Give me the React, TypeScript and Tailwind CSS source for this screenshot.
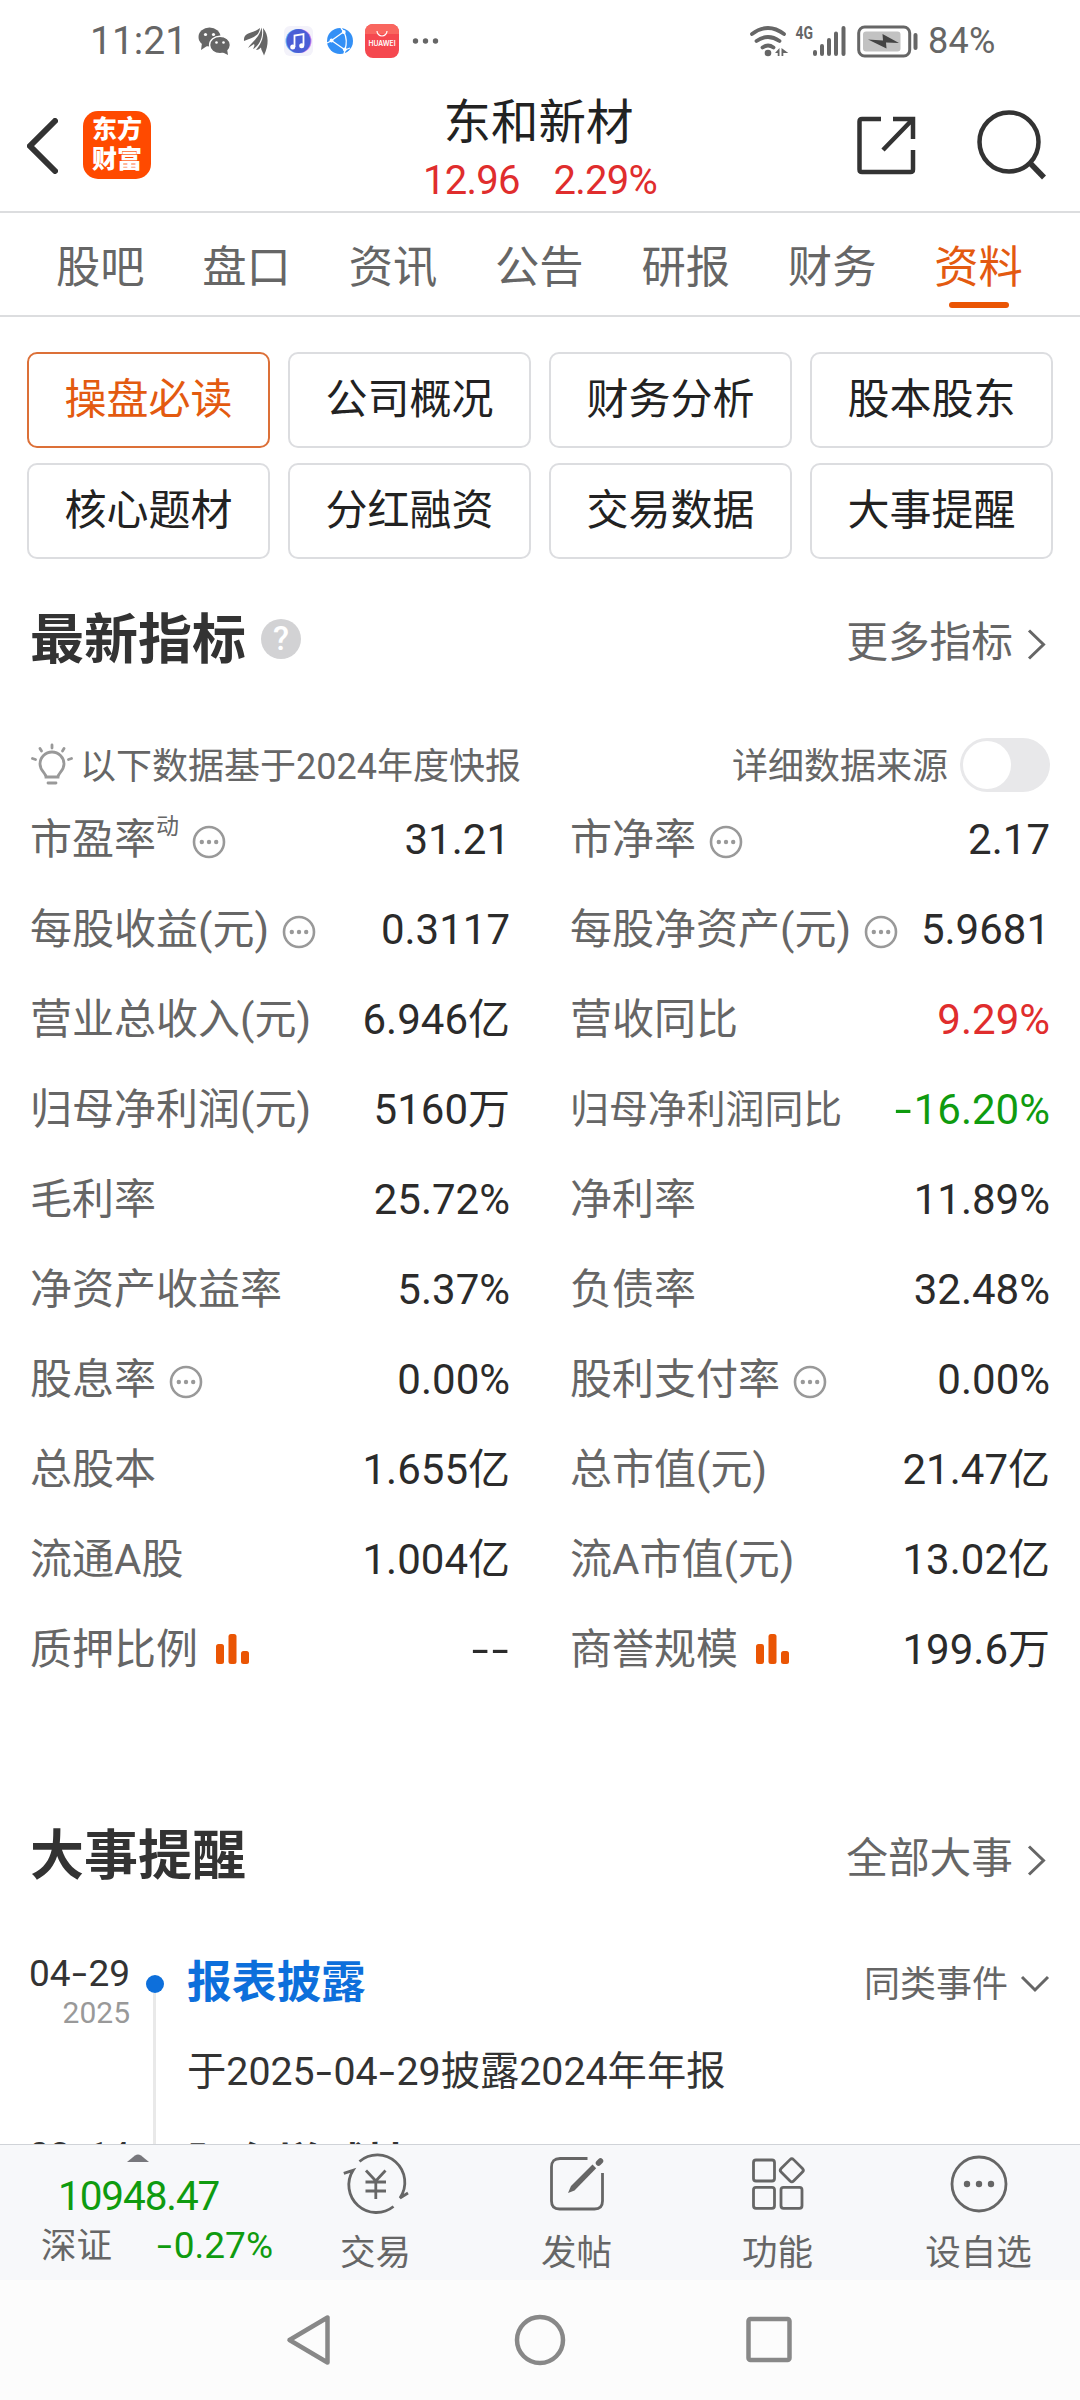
import React from "react";

type Metric = {
  label: string;
  value: string;
  sup?: string;
  info?: boolean;
  chart?: boolean;
  small?: boolean;
  tone?: "up" | "down";
};

const tabs = ["股吧", "盘口", "资讯", "公告", "研报", "财务", "资料"];
const topics = ["操盘必读", "公司概况", "财务分析", "股本股东", "核心题材", "分红融资", "交易数据", "大事提醒"];

const metrics: Metric[] = [
  { label: "市盈率", sup: "动", info: true, value: "31.21" },
  { label: "市净率", info: true, value: "2.17" },
  { label: "每股收益(元)", info: true, value: "0.3117" },
  { label: "每股净资产(元)", info: true, value: "5.9681" },
  { label: "营业总收入(元)", value: "6.946亿" },
  { label: "营收同比", value: "9.29%", tone: "up" },
  { label: "归母净利润(元)", value: "5160万" },
  { label: "归母净利润同比", value: "-16.20%", tone: "down", small: true },
  { label: "毛利率", value: "25.72%" },
  { label: "净利率", value: "11.89%" },
  { label: "净资产收益率", value: "5.37%" },
  { label: "负债率", value: "32.48%" },
  { label: "股息率", info: true, value: "0.00%" },
  { label: "股利支付率", info: true, value: "0.00%" },
  { label: "总股本", value: "1.655亿" },
  { label: "总市值(元)", value: "21.47亿" },
  { label: "流通A股", value: "1.004亿" },
  { label: "流A市值(元)", value: "13.02亿" },
  { label: "质押比例", chart: true, value: "--" },
  { label: "商誉规模", chart: true, value: "199.6万" },
];

/* Text whose hyphens are drawn as wide as a digit. */
function Wide({ children }: { children: string }) {
  return (
    <>
      {children.split(/(-)/).map((part, i) =>
        part === "-" ? (
          <span key={i} className="mx-[0.09em] inline-block w-[0.3em] scale-x-[1.45] text-center">-</span>
        ) : (
          part
        ),
      )}
    </>
  );
}

function StatusBar() {
  return (
    <div className="flex h-[82px] shrink-0 items-center pl-[90px] text-[#666]">
      <span className="w-[108px] text-[39px] leading-none">11:21</span>
      <svg width="242" height="40" viewBox="198 19 242 40">
        <ellipse cx="209.5" cy="35" rx="11" ry="9.5" fill="#666" />
        <path d="M202 41l-1 7 6-4z" fill="#666" />
        <circle cx="205.5" cy="32.5" r="1.6" fill="#fff" />
        <circle cx="213.5" cy="32.5" r="1.6" fill="#fff" />
        <ellipse cx="220" cy="43" rx="10.4" ry="8.8" fill="#666" stroke="#fff" strokeWidth="1.4" />
        <path d="M222 50l6 3-1-6z" fill="#666" />
        <circle cx="216.5" cy="40.5" r="1.3" fill="#fff" />
        <circle cx="223.500" cy="40.500" r="1.300" fill="#fff" />
        <path d="M244 39c-1-9 9-7 16-13-1 8-6 9-16 13z" fill="#666" />
        <path d="M248 46c4-7 11-9 13.500-20.500C264 35 259 44 253 47c1-2 2-3 1-5-2 1-4 3-6 4z" fill="#666" />
        <path d="M256 48c6-7 8-14 7-22 6 7 6 17 1 27.500-1-3-3-5.500-3-8-1 1-3 2.500-5 2.500z" fill="#666" />
        <rect x="284" y="24" width="29" height="30" rx="6" fill="#f3f2fa" />
        <circle cx="299.500" cy="39" r="12" fill="#c77df0" />
        <circle cx="297.500" cy="39" r="12" fill="#6fb8f5" />
        <circle cx="298.500" cy="39" r="12" fill="#4a5fd6" />
        <path d="M294.500 45V33.500l9-1.500V43.500" stroke="#fff" strokeWidth="1.800" fill="none" />
        <circle cx="292.700" cy="45" r="2.500" fill="#fff" />
        <circle cx="301.700" cy="43.700" r="2.500" fill="#fff" />
        <circle cx="340" cy="39" r="13" fill="#3390f6" />
        <path d="M331.500 38.500L343.500 30M331.500 38.500l13 9M344 30q4 8 1 18M331 39l-4 2M344 30l-3-4M345 48l5-2M345 48l-1 4" stroke="#fff" strokeWidth="1.300" fill="none" />
        <circle cx="331.500" cy="38.500" r="1.900" fill="#fff" />
        <circle cx="343.800" cy="30" r="1.900" fill="#fff" />
        <circle cx="344.800" cy="47.500" r="1.900" fill="#fff" />
        <rect x="365" y="22" width="34" height="34" rx="8" fill="#f5484f" />
        <path d="M365 32v-2a8 8 0 0 1 8-8h18a8 8 0 0 1 8 8v2z" fill="#f9665f" />
        <path d="M377 29a5 5 0 0 0 10 0" stroke="#fff" strokeWidth="1.200" fill="none" />
        <text x="368.500" y="44" fontSize="7" fontWeight="600" fill="#fff" textLength="27" lengthAdjust="spacingAndGlyphs" fontFamily="Inter">HUAWEI</text>
        <circle cx="415.500" cy="39" r="2.700" fill="#666" />
        <circle cx="425.500" cy="39" r="2.700" fill="#666" />
        <circle cx="435.500" cy="39" r="2.700" fill="#666" />
      </svg>
      <svg className="ml-[308px]" width="172" height="40" viewBox="748 19 172 40">
        <g stroke="#666" strokeWidth="3.800" fill="none" strokeLinecap="round">
          <path d="M752 32q16-12 32 0M756.500 39q11.500-8 23 0M762.500 45.500q5.500-4 11 0" />
        </g>
        <circle cx="768" cy="51" r="3.300" fill="#666" />
        <path d="M775 51l4.500-5v8h-1.800v-3zM781.500 46v8h1.800v-3h5z" fill="#666" />
        <text x="795.500" y="37" fontSize="18" fontWeight="700" fill="#666" textLength="17.500" lengthAdjust="spacingAndGlyphs" fontFamily="Roboto">4G</text>
        <g stroke="#666" strokeWidth="4" strokeLinecap="round">
          <path d="M815 50v2M822 44v8M829 38v14M836 31.500v20.500M843.500 26v26" />
        </g>
        <rect x="858.700" y="25" width="51" height="29" rx="6" fill="none" stroke="#666" strokeWidth="3" />
        <rect x="863" y="29.500" width="37.500" height="20" rx="3" fill="#c2c2c2" />
        <path d="M868 37.500l15 1-.5-6.500 16.500 9-13-.5.500 6z" fill="#444" />
        <rect x="913.500" y="31" width="4" height="17" rx="2" fill="#666" />
      </svg>
      <span className="ml-[8px] text-[36px] leading-none tracking-[0.3px]">84%</span>
    </div>
  );
}

function Header() {
  return (
    <div className="flex h-[131px] shrink-0 items-center border-b-2 border-[#dcdddf] pr-[31px] pl-[27px]">
      <svg width="31" height="56" viewBox="0 0 31 56" fill="none" stroke="#333" strokeWidth="6" strokeLinecap="round" className="mt-[-2px]">
        <path d="M28 3L3 28l25 25" />
      </svg>
      <div className="mt-[-3px] ml-[25px] flex h-[68px] w-[68px] flex-col items-center justify-center rounded-[15px] bg-[#ff4a00] text-[25px] leading-[30px] font-black text-white">
        <span>东方</span>
        <span>财富</span>
      </div>
      <div className="flex flex-1 flex-col items-center pt-[9px] pr-[4px] pl-[80px]">
        <h1 className="mr-[3px] text-[47.5px] leading-[60px] text-[#222]">东和新材</h1>
        <div className="flex gap-[34px] text-[40px] leading-[56px] tracking-[-0.8px] text-[#e02d2d]">
          <span>12.96</span>
          <span>2.29%</span>
        </div>
      </div>
      <svg className="mt-[-4px]" width="196" height="72" viewBox="853 109 196 72" fill="none" stroke="#333" strokeWidth="4.500">
        <path d="M881 119H862q-2.500 0-2.500 2.500V169.500q0 2.500 2.500 2.500h48.500q2.500 0 2.500-2.500V150M893 119h20v20M913 119l-30 31" />
        <circle cx="1009" cy="142" r="29.500" />
        <path d="M1030 163l14 14.500" strokeWidth="5.500" />
      </svg>
    </div>
  );
}

function InfoDots() {
  return (
    <svg className="mt-[5px] ml-[13px] shrink-0" width="34" height="34" viewBox="0 0 34 34">
      <circle cx="17" cy="17" r="15" fill="none" stroke="#999" strokeWidth="2.600" />
      <circle cx="9.800" cy="17" r="2.200" fill="#999" />
      <circle cx="17" cy="17" r="2.200" fill="#999" />
      <circle cx="24.200" cy="17" r="2.200" fill="#999" />
    </svg>
  );
}

function MiniBars() {
  return (
    <svg className="mt-[-2px] ml-[18px]" width="33" height="30" viewBox="0 0 33 30" fill="#ea5504">
      <rect x="0" y="10" width="8" height="20" rx="2.500" />
      <rect x="12.500" y="0" width="8" height="30" rx="2.500" />
      <rect x="25" y="17" width="8" height="13" rx="2.500" />
    </svg>
  );
}

function MetricCell({ m }: { m: Metric }) {
  const tone = m.tone === "up" ? "text-[#e02d2d]" : m.tone === "down" ? "text-[#0f9b0f]" : "text-[#2b2b2b]";
  return (
    <div className="flex h-[90px] items-center pt-[3px] leading-[50px] whitespace-nowrap">
      <span className={m.small ? "text-[38.9px] text-[#666]" : "text-[42px] text-[#666]"}>{m.label}</span>
      {m.sup && <span className="mt-[-25px] text-[23px] leading-[28px] text-[#666]">{m.sup}</span>}
      {m.info && <InfoDots />}
      {m.chart && <MiniBars />}
      <span className={`ml-auto text-[42px] ${tone}`}>
        <Wide>{m.value}</Wide>
      </span>
    </div>
  );
}

function SectionTitle({ title, more, help }: { title: string; more: string; help?: boolean }) {
  return (
    <div className="flex h-[60px] items-center pr-[34px] pl-[30px]">
      <h2 className="text-[54px] leading-[60px] font-bold text-[#333]">{title}</h2>
      {help && (
        <span className="mt-[-5px] ml-[15px] flex h-[40px] w-[40px] items-center justify-center rounded-full bg-[#d2d2d4] text-[33px] leading-none font-medium text-white">?</span>
      )}
      <span className="mt-[4px] ml-auto text-[41.7px] leading-[60px] text-[#666]">{more}</span>
      <svg className="mt-[7px] ml-[14px]" width="19" height="31" viewBox="0 0 19 31" fill="none" stroke="#666" strokeWidth="3">
        <path d="M2 1.500L16.500 15.500 2 29.500" />
      </svg>
    </div>
  );
}

function EventItem({ date, year, title, text, first }: { date: string; year: string; title: string; text: string; first?: boolean }) {
  return (
    <div className="flex h-[182px]">
      <div className="w-[130px] text-right whitespace-nowrap">
        <div className="mt-[6px] text-[37px] leading-[36px] text-[#333]">
          <Wide>{date}</Wide>
        </div>
        <div className="mt-[3px] text-[30px] leading-[36px] text-[#999]">{year}</div>
      </div>
      <div className="flex w-[57px] flex-col items-center pr-[8px]">
        <span className={first ? "h-[25px] w-[3px]" : "h-[25px] w-[3px] bg-[#e9e9e9]"} />
        <span className="h-[18px] w-[18px] rounded-full bg-[#0d6fdb]" />
        <span className="w-[3px] flex-1 bg-[#e9e9e9]" />
      </div>
      <div className="flex-1">
        <div className="flex h-[66px] items-center pr-[30px] leading-[60px]">
          <span className={first ? "text-[44.7px] font-bold text-[#0d6fdb]" : "text-[44.7px] font-bold text-[#333]"}>{title}</span>
          {first && (
            <>
              <span className="mt-[3px] ml-auto text-[36px] text-[#666]">同类事件</span>
              <svg className="mt-[2px] ml-[12px]" width="30" height="18" viewBox="0 0 30 18" fill="none" stroke="#666" strokeWidth="3">
                <path d="M2 2l13 13L28 2" />
              </svg>
            </>
          )}
        </div>
        <p className="mt-[26px] text-[39.3px] leading-[60px] text-[#333]">
          <Wide>{text}</Wide>
        </p>
      </div>
    </div>
  );
}

function BottomBar() {
  return (
    <div className="flex h-[136px] shrink-0 border-t border-[#d0d3d8] bg-[#f7f8fa] text-[#666]">
      <div className="flex w-[275px] flex-col">
        <svg className="mt-[9px] ml-[127px]" width="22" height="8" viewBox="0 0 22 8">
          <path d="M0 8L8 1.500q3-2 6 0L22 8z" fill="#77777c" />
        </svg>
        <span className="mt-[12px] ml-[58px] text-[40.5px] leading-[44px] tracking-[-1.1px] text-[#0f9b0f]">10948.47</span>
        <div className="mt-[5px] flex items-center pl-[41px] leading-[46px]">
          <span className="text-[35.5px]">深证</span>
          <span className="ml-[44px] text-[37px] text-[#0f9b0f]">
            <Wide>-0.27%</Wide>
          </span>
        </div>
      </div>
      <BarItem label="交易">
        <path d="M12.500 6.500A27.500 27.500 0 0 1 53 43L61 38M-3.200 18.300L6.100 15.300A27.500 27.500 0 0 0 46.500 51.500M19 15.500L28.800 26 38.500 15.500M28.800 26v18M18.500 27h20.500M18.500 36h20.500" />
      </BarItem>
      <BarItem label="发帖">
        <path d="M39.500 3.500H12Q3.500 3.500 3.500 12V46q0 8 8 8H46.500q8 0 8-8V18" />
        <path d="M20 38l3-7L44.500 9.500 48.200 13.200 26.500 35.500z" fill="#666" stroke="none" />
        <path d="M50.500 8l2-2" strokeWidth="5.500" strokeLinecap="round" />
      </BarItem>
      <BarItem label="功能">
        <rect x="4.500" y="5" width="21" height="21" rx="2.500" />
        <rect x="4.500" y="32.300" width="21" height="21" rx="2.500" />
        <rect x="32" y="32.300" width="21" height="21" rx="2.500" />
        <rect x="34" y="6.500" width="17.600" height="17.600" rx="2.500" transform="rotate(45 42.800 15.300)" />
      </BarItem>
      <BarItem label="设自选">
        <circle cx="29" cy="29" r="27" />
        <g fill="#666" stroke="none">
          <circle cx="17" cy="29" r="3.200" />
          <circle cx="29" cy="29" r="3.200" />
          <circle cx="41" cy="29" r="3.200" />
        </g>
      </BarItem>
    </div>
  );
}

function BarItem({ label, children }: { label: string; children: React.ReactNode }) {
  return (
    <div className="flex w-[201px] flex-col items-center pt-[10px]">
      <svg width="58" height="58" viewBox="0 0 58 58" fill="none" stroke="#666" strokeWidth="2.800" className="overflow-visible">
        {children}
      </svg>
      <span className="mt-[15px] text-[35.5px] leading-[50px]">{label}</span>
    </div>
  );
}

function SystemNav() {
  return (
    <div className="flex h-[120px] shrink-0 items-center justify-center gap-[178px] bg-[#fcfcfc]">
      <svg width="52" height="52" viewBox="0 0 52 52" fill="none" stroke="#888" strokeWidth="4.500" strokeLinejoin="round">
        <path d="M5.500 26L43.500 3.500v45z" />
      </svg>
      <svg width="52" height="52" viewBox="0 0 52 52" fill="none" stroke="#888" strokeWidth="4.500">
        <circle cx="26" cy="26" r="23" />
      </svg>
      <svg width="52" height="52" viewBox="0 0 52 52" fill="none" stroke="#888" strokeWidth="4.500">
        <rect x="4.500" y="5" width="41" height="41" rx="2" />
      </svg>
    </div>
  );
}

export default function App() {
  return (
    <div className="flex h-[2400px] w-[1080px] flex-col overflow-hidden bg-white font-['Roboto','Noto_Sans_CJK_SC',sans-serif]">
      <StatusBar />
      <Header />
      <nav className="flex h-[104px] shrink-0 border-b-2 border-[#dcdddf] pr-[28px] pl-[27px]">
        {tabs.map((t, i) => (
          <div key={t} className={i === 6 ? "flex w-[146.4px] flex-col items-center text-[#e35a10]" : "flex w-[146.4px] flex-col items-center text-[#666]"}>
            <span className="mt-[23px] text-[44.3px] leading-[64px]">{t}</span>
            {i === 6 && <span className="mt-[2px] h-[6px] w-[60px] rounded-[3px] bg-[#ea5504]" />}
          </div>
        ))}
      </nav>
      <main className="min-h-0 flex-1 overflow-hidden">
        <div className="grid grid-cols-4 gap-x-[18px] gap-y-[15px] px-[27px] pt-[35px]">
          {topics.map((t, i) => (
            <div
              key={t}
              className={
                i === 0
                  ? "flex h-[96px] items-center justify-center rounded-[10px] border-2 border-[#dc7038] text-[42px] text-[#e35a10]"
                  : "flex h-[96px] items-center justify-center rounded-[10px] border-2 border-[#dcdde0] text-[42px] text-[#222]"
              }
            >
              <span className="leading-[50px]">{t}</span>
            </div>
          ))}
        </div>
        <div className="mt-[52px]">
          <SectionTitle title="最新指标" more="更多指标" help />
        </div>
        <div className="mt-[67px] flex h-[54px] items-center pr-[30px] pl-[31px] text-[36px] leading-[44px] text-[#666]">
          <svg className="mt-[-2px]" width="42" height="42" viewBox="0 0 42 42" fill="none" stroke="#999" strokeWidth="2.800" strokeLinecap="round">
            <path d="M15 34c0-4-6-6-6-13a12 12 0 0 1 24 0c0 7-6 9-6 13zM17 40h8M21 2v3M9 5.500l1.500 2.500M33 5.500L31.500 8M1.500 15.500l3 1M40.500 15.500l-3 1" />
          </svg>
          <span className="mt-[3px] ml-[7px]">以下数据基于2024年度快报</span>
          <span className="mt-[3px] ml-auto">详细数据来源</span>
          <span className="ml-[12px] flex h-[54px] w-[90px] items-center rounded-full bg-[#e8e8ea] pl-[3px]">
            <span className="h-[48px] w-[48px] rounded-full bg-white" />
          </span>
        </div>
        <div className="mt-[1px] grid grid-cols-2 gap-x-[60px] px-[30px]">
          {metrics.map((m) => (
            <MetricCell key={m.label} m={m} />
          ))}
        </div>
        <div className="mt-[134px] mb-[63px]">
          <SectionTitle title="大事提醒" more="全部大事" />
        </div>
        <EventItem first date="04-29" year="2025" title="报表披露" text="于2025-04-29披露2024年年报" />
        <EventItem date="03-14" year="" title="股东增减持" text="" />
      </main>
      <BottomBar />
      <SystemNav />
    </div>
  );
}
